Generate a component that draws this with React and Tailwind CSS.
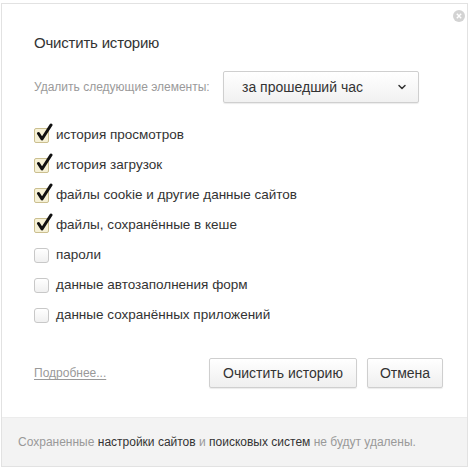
import { ChevronDown } from "lucide-react";

const items = [
  { label: "история просмотров", on: true },
  { label: "история загрузок", on: true },
  { label: "файлы cookie и другие данные сайтов", on: true },
  { label: "файлы, сохранённые в кеше", on: true },
  { label: "пароли", on: false },
  { label: "данные автозаполнения форм", on: false },
  { label: "данные сохранённых приложений", on: false },
];

function Box({ on }) {
  if (!on) {
    return <span className="block w-[15px] h-[15px] rounded-[3px] border border-[#c8c8c8] bg-gradient-to-b from-white to-[#f0f0f0]" />;
  }
  return (
    <span className="relative block w-[15px] h-[15px] rounded-[2px] border border-[#cbbf8f] bg-[#f6f1d6]">
      <svg className="absolute -top-[6px] left-[1px]" width="17" height="19" viewBox="0 0 17 19">
        <path d="M2.5 10.5 L6 16 L15 2" fill="none" stroke="#111" strokeWidth="3" strokeLinecap="round" strokeLinejoin="round" />
      </svg>
    </span>
  );
}

const btn =
  "h-[30px] text-[14px] text-[#333] border border-[#cfcfcf] rounded-[2px] bg-gradient-to-b from-white to-[#efefef] shadow-[0_1px_1px_rgba(0,0,0,0.08)] whitespace-nowrap";

export default function App() {
  return (
    <div className="w-[474px] h-[474px] bg-white font-['Liberation_Sans',Arial,sans-serif] text-[#333]">
      <div className="ml-[1px] pt-[3px]">
        <div className="w-[467px] border border-[#e2e2e2] bg-white">
          <div className="relative pl-[32px] pr-[24px] pt-[29px] pb-[29px]">
            <span className="absolute right-[2px] top-[6px] w-[12px] h-[12px] rounded-full bg-[#d3d3d3] flex items-center justify-center">
              <svg width="6" height="6" viewBox="0 0 6 6">
                <path d="M0.8 0.8 L5.2 5.2 M5.2 0.8 L0.8 5.2" stroke="#fff" strokeWidth="1.4" />
              </svg>
            </span>
            <h1 className="text-[15px] leading-[20px] tracking-[-0.2px] text-[#333]">Очистить историю</h1>
            <div className="flex items-center mt-[18px]">
              <span className="text-[12px] text-[#9a9a9a] w-[189px] whitespace-nowrap">Удалить следующие элементы:</span>
              <div className="w-[196px] h-[32px] flex items-center justify-between pl-[18px] pr-[10px] border border-[#cfcfcf] rounded-[2px] bg-gradient-to-b from-white to-[#f1f1f1] shadow-[0_1px_1px_rgba(0,0,0,0.08)]">
                <span className="text-[14px] text-[#333] whitespace-nowrap">за прошедший час</span>
                <ChevronDown className="w-[12px] h-[12px] text-[#333]" strokeWidth={3} />
              </div>
            </div>
            <ul className="mt-[17px]">
              {items.map((it) => (
                <li key={it.label} className="h-[30px] flex items-center gap-[7px]">
                  <Box on={it.on} />
                  <span className="text-[13.5px] text-[#333] whitespace-nowrap">{it.label}</span>
                </li>
              ))}
            </ul>
            <div className="flex items-center mt-[28px]">
              <a className="text-[12px] text-[#999] underline underline-offset-2 flex-1">Подробнее...</a>
              <button className={`${btn} w-[148px]`}>Очистить историю</button>
              <button className={`${btn} ml-[10px] w-[76px]`}>Отмена</button>
            </div>
          </div>
          <div className="h-[49px] bg-[#f3f3f3] border-t border-[#ececec] flex items-center pl-[16px] text-[12px] text-[#999] whitespace-nowrap">
            <p>
              Сохраненные <span className="text-[#333]">настройки сайтов</span> и <span className="text-[#333]">поисковых систем</span> не будут удалены.
            </p>
          </div>
        </div>
      </div>
    </div>
  );
}
